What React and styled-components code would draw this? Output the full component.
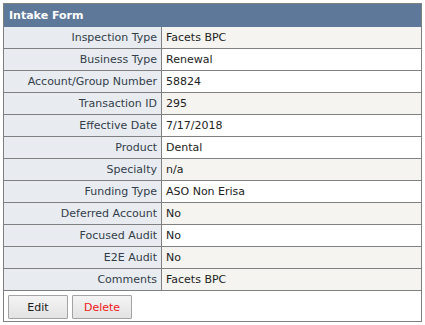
import React from 'react';
import styled, { createGlobalStyle } from 'styled-components';

const fields = [
  { label: 'Inspection Type', value: 'Facets BPC', shaded: true },
  { label: 'Business Type', value: 'Renewal' },
  { label: 'Account/Group Number', value: '58824' },
  { label: 'Transaction ID', value: '295', shaded: true },
  { label: 'Effective Date', value: '7/17/2018' },
  { label: 'Product', value: 'Dental' },
  { label: 'Specialty', value: 'n/a', shaded: true },
  { label: 'Funding Type', value: 'ASO Non Erisa' },
  { label: 'Deferred Account', value: 'No', shaded: true },
  { label: 'Focused Audit', value: 'No' },
  { label: 'E2E Audit', value: 'No', shaded: true },
  { label: 'Comments', value: 'Facets BPC', shaded: true },
];

const IntakeForm = () => (
  <Panel>
    <Header>Intake Form</Header>
    {fields.map((field) => (
      <Row key={field.label}>
        <Label>{field.label}</Label>
        <Value $shaded={field.shaded}>{field.value}</Value>
      </Row>
    ))}
    <Actions>
      <Button type="button">Edit</Button>
      <Button type="button" $danger>Delete</Button>
    </Actions>
  </Panel>
);

export default function App() {
  return (
    <>
      <GlobalStyle />
      <IntakeForm />
    </>
  );
}

const GlobalStyle = createGlobalStyle`
  body {
    margin: 0;
    padding: 3px;
    background: #ffffff;
    font-family: "DejaVu Sans", Verdana, sans-serif;
    font-size: 11px;
  }
`;

const Panel = styled('div')`
  width: 417px;
  border: 1px solid #7f7f7f;
  background: #ffffff;
`;

const Header = styled('div')`
  height: 23px;
  line-height: 23px;
  padding-left: 5px;
  background: #5d7898;
  color: #ffffff;
  font-weight: bold;
  font-size: 11px;
`;

const Row = styled('div')`
  display: grid;
  grid-template-columns: 158px 1fr;
  height: 21px;
  overflow: hidden;
  border-bottom: 1px solid #808080;
`;

const Label = styled('div')`
  background: #e8ecf0;
  border-right: 1px solid #808080;
  color: #333d4a;
  text-align: right;
  line-height: 22px;
  padding-right: 4px;
`;

const Value = styled('div')`
  background: ${(props) => (props.$shaded ? '#f5f4f0' : '#ffffff')};
  color: #222222;
  line-height: 22px;
  padding-left: 4px;
`;

const Actions = styled('div')`
  display: flex;
  gap: 4px;
  padding: 4px 4px 2px 4px;
  height: 24px;
`;

const Button = styled('button')`
  width: 60px;
  height: 24px;
  margin: 0;
  padding: 0;
  border: 1px solid #a3a3a3;
  border-radius: 1px;
  background: linear-gradient(#f4f4f4, #e3e3e3);
  color: ${(props) => (props.$danger ? '#f01818' : '#1a1a1a')};
  font-family: "DejaVu Sans", Verdana, sans-serif;
  font-size: 11px;
  cursor: pointer;
`;
